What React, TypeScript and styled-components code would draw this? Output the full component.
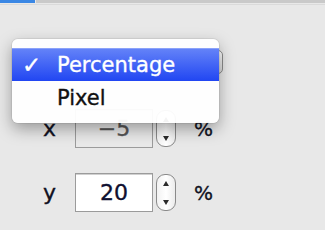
import React from "react";
import styled, { createGlobalStyle } from "styled-components";

const GlobalStyle = createGlobalStyle`
  html, body {
    margin: 0;
    padding: 0;
    background: #e8e8e8;
  }
  body {
    font-family: "DejaVu Sans", "Liberation Sans", sans-serif;
    -webkit-text-stroke: 0.35px currentColor;
  }
`;

const fields = [
  { name: "x", value: "−5", disabled: true },
  { name: "y", value: "20", disabled: false },
];

function Stepper() {
  return (
    <StepperBox>
      <svg width="8" height="28" viewBox="0 0 8 28">
        <path d="M4 2 L7 7 L1 7 Z" fill="#2b2b2b" />
        <path d="M4 26 L7 21 L1 21 Z" fill="#2b2b2b" />
      </svg>
    </StepperBox>
  );
}

export default function App() {
  return (
    <>
      <GlobalStyle />
      <Page>
        <TabStrip>
          <ActiveTab />
          <TabLine />
        </TabStrip>
        <Panel>
          <PopupRow>
            <PopupButton />
            <Menu>
              <MenuItem selected>
                <Check>✓</Check>
                Percentage
              </MenuItem>
              <MenuItem>Pixel</MenuItem>
            </Menu>
          </PopupRow>
          {fields.map((f, i) => (
            <FieldRow key={f.name} first={i === 0}>
              <Label>{f.name}</Label>
              <NumberBox disabled={f.disabled}>{f.value}</NumberBox>
              <Stepper />
              <Unit>%</Unit>
            </FieldRow>
          ))}
        </Panel>
      </Page>
    </>
  );
}

const Page = styled.div`
  width: 325px;
  height: 230px;
  overflow: hidden;
  display: flex;
  flex-direction: column;
  background: #e8e8e8;
`;

const TabStrip = styled.div`
  display: flex;
  height: 4px;
  border-bottom: 1px solid #dadada;
`;

const ActiveTab = styled.div`
  width: 35px;
  height: 3px;
  background: #3a87e4;
`;

const TabLine = styled.div`
  flex: 1;
  height: 3px;
  background: #c9c9c9;
  margin-left: 1px;
`;

const Panel = styled.div`
  display: flex;
  flex-direction: column;
  padding: 45px 0 0 12px;
`;

const PopupRow = styled.div`
  position: relative;
  height: 24px;
`;

const PopupButton = styled.div`
  width: 209px;
  height: 22px;
  border: 1px solid #8c8c8c;
  border-radius: 5px;
  background: linear-gradient(#fdfdfd, #d8d8d8);
`;

const Menu = styled.div`
  position: absolute;
  left: 0;
  top: -11px;
  width: 207px;
  padding: 9px 0 9px;
  border-radius: 6px;
  background: rgba(255, 255, 255, 0.95);
  box-shadow: 0 6px 16px rgba(0, 0, 0, 0.34), 0 0 0 1px rgba(0, 0, 0, 0.06);
  z-index: 2;
`;

const MenuItem = styled.div<{ selected?: boolean }>`
  position: relative;
  height: 33px;
  display: flex;
  align-items: center;
  padding-left: 45px;
  font-size: 21px;
  color: ${({ selected }) => (selected ? "#ffffff" : "#111111")};
  background: ${({ selected }) =>
    selected ? "linear-gradient(#6382f8, #2146f2)" : "transparent"};
  border-top: ${({ selected }) => (selected ? "1px solid #8ba2f9" : "none")};
  box-sizing: border-box;
`;

const Check = styled.span`
  position: absolute;
  left: 10px;
  font-size: 23px;
`;

const FieldRow = styled.div<{ first?: boolean }>`
  display: flex;
  align-items: center;
  margin-top: ${({ first }) => (first ? "35px" : "25px")};
  padding-left: 31px;
`;

const Label = styled.div`
  width: 32px;
  font-size: 22px;
  color: #111122;
`;

const NumberBox = styled.div<{ disabled?: boolean }>`
  width: 76px;
  height: 37px;
  border: 1px solid #9b9b9b;
  box-shadow: inset 0 1px 0 #d0d0d0;
  background: ${({ disabled }) => (disabled ? "#e9e9e9" : "#ffffff")};
  color: ${({ disabled }) => (disabled ? "#555555" : "#101030")};
  font-size: 22px;
  display: flex;
  align-items: center;
  justify-content: center;
`;

const StepperBox = styled.div`
  width: 18px;
  height: 35px;
  margin-left: 3px;
  border: 1px solid #8a8a8a;
  border-radius: 9px;
  background: linear-gradient(90deg, #f2f2f2, #ffffff 50%, #ececec);
  display: flex;
  align-items: center;
  justify-content: center;
`;

const Unit = styled.div`
  margin-left: 18px;
  font-size: 20px;
  color: #111122;
`;
